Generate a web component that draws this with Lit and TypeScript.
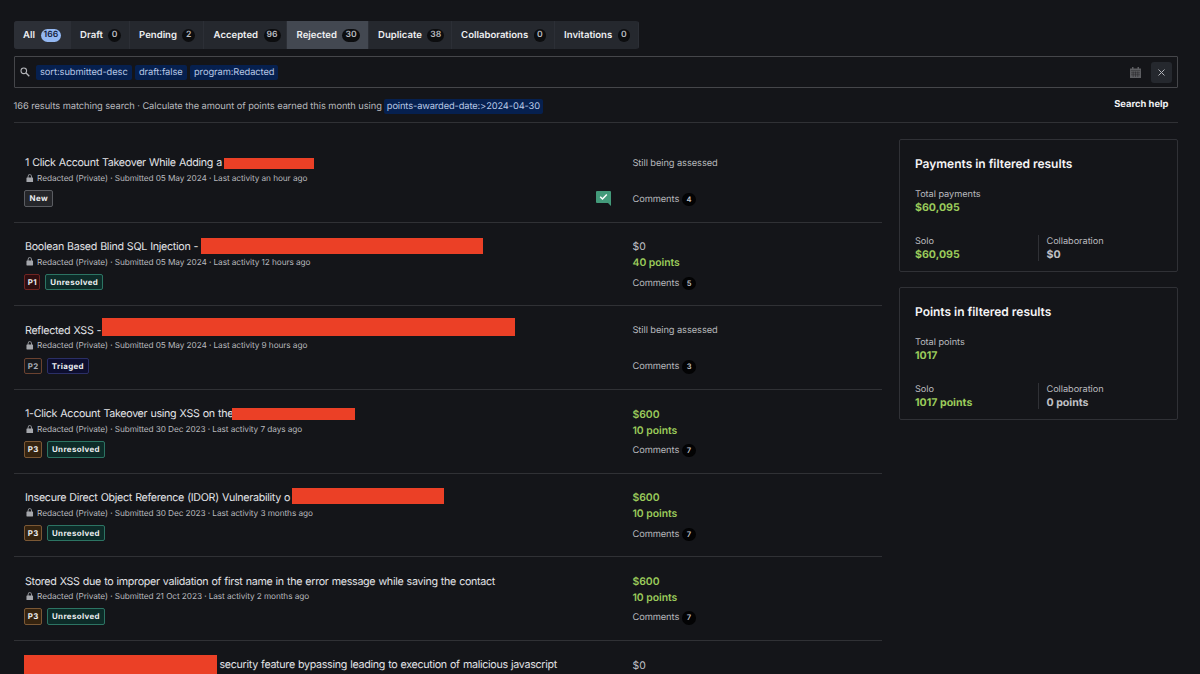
import { LitElement, html, css, svg, nothing } from "lit";
import { customElement } from "lit/decorators.js";
import { classMap } from "lit/directives/class-map.js";
import { styleMap } from "lit/directives/style-map.js";

interface Tab { label: string; count: number; width: number; kind?: string }
interface Mask { x: number; y: number; w: number; h: number }
interface Row {
  title: string; indent?: number; mask?: Mask; submitted: string; activity: string;
  priority?: string; status: string; bounty?: string; points?: string; comments?: number; flag?: boolean; partial?: boolean;
}

const TABS: Tab[] = [
  { label: "All", count: 166, width: 57, kind: "current" },
  { label: "Draft", count: 0, width: 59 },
  { label: "Pending", count: 2, width: 74.5 },
  { label: "Accepted", count: 96, width: 83 },
  { label: "Rejected", count: 30, width: 81.5, kind: "hovered" },
  { label: "Duplicate", count: 38, width: 83 },
  { label: "Collaborations", count: 0, width: 103 },
  { label: "Invitations", count: 0, width: 84.5 },
];

const ROWS: Row[] = [
  { title: "1 Click Account Takeover While Adding a", mask: { x: 199, y: 2.5, w: 90.3, h: 11.5 }, submitted: "05 May 2024", activity: "an hour ago", status: "New", comments: 4, flag: true },
  { title: "Boolean Based Blind SQL Injection -", mask: { x: 175.5, y: -1, w: 282.3, h: 16.3 }, submitted: "05 May 2024", activity: "12 hours ago", priority: "P1", status: "Unresolved", bounty: "$0", points: "40 points", comments: 5 },
  { title: "Reflected XSS -", mask: { x: 77, y: -4.6, w: 413.4, h: 18.6 }, submitted: "05 May 2024", activity: "9 hours ago", priority: "P2", status: "Triaged", comments: 3 },
  { title: "1-Click Account Takeover using XSS on the", mask: { x: 207.2, y: 1.7, w: 122.4, h: 12.2 }, submitted: "30 Dec 2023", activity: "7 days ago", priority: "P3", status: "Unresolved", bounty: "$600", points: "10 points", comments: 7 },
  { title: "Insecure Direct Object Reference (IDOR) Vulnerability o", mask: { x: 267, y: -1.3, w: 152, h: 15.8 }, submitted: "30 Dec 2023", activity: "3 months ago", priority: "P3", status: "Unresolved", bounty: "$600", points: "10 points", comments: 7 },
  { title: "Stored XSS due to improper validation of first name in the error message while saving the contact", submitted: "21 Oct 2023", activity: "2 months ago", priority: "P3", status: "Unresolved", bounty: "$600", points: "10 points", comments: 7 },
  { title: "security feature bypassing leading to execution of malicious javascript", indent: 194.5, mask: { x: -1.5, y: -2, w: 193.2, h: 24 }, submitted: "", activity: "", status: "", bounty: "$0", partial: true },
];

const lock = svg`<svg class="lock" viewBox="0 0 16 18"><path fill="currentColor" d="M3.5 7.5V5a4.5 4.5 0 0 1 9 0v2.5H14a1 1 0 0 1 1 1V17a1 1 0 0 1-1 1H2a1 1 0 0 1-1-1V8.5a1 1 0 0 1 1-1zM5.3 7.5h5.4V5a2.7 2.7 0 0 0-5.4 0z"/></svg>`;

@customElement("report-row")
export class ReportRow extends LitElement {
  static properties = { row: { attribute: false } };
  declare row: Row;

  static styles = css`
    :host { display: grid; grid-template-columns: 607.5px 1fr; box-sizing: border-box; height: 83.65px; padding: 16px 0 0 11.5px; border-bottom: 1px solid #303135; white-space: nowrap; }
    .main { position: relative; padding-top: 0.3px; }
    .title { font-size: 10.7px; line-height: 15px; letter-spacing: -0.3px; word-spacing: 0.45px; color: #e2e3e7; }
    .mask { position: absolute; background: #eb4026; }
    .meta { display: flex; align-items: center; gap: 3.6px; height: 12px; margin-top: 1.7px; padding-left: 1px; font-size: 8.25px; letter-spacing: -0.08px; color: #b8b9be; }
    .lock { width: 7.5px; height: 8.5px; color: #a5a7ac; }
    .foot { display: flex; align-items: center; height: 17px; margin-top: 6px; gap: 5px; }
    .tag { box-sizing: border-box; height: 16.5px; padding: 0 3.7px 0 4.2px; border: 1px solid; border-radius: 2px; font-size: 7.9px; line-height: 15.5px; font-weight: 700; letter-spacing: 0.38px; color: #eceef0; }
    .tag.p { padding: 0 2px 0 2.4px; margin-left: -0.6px; }
    .tag.New { background: #25262a; border-color: #5a5c61; margin-left: -0.6px; }
    .P1 { background: #2e0e10; border-color: #702422; }
    .tag.P2 { background: #17181b; border-color: #6b4230; color: #a9adb6; }
    .P3 { background: #35230f; border-color: #7b5835; }
    .Unresolved { background: #0d2b28; border-color: #2c7463; }
    .Triaged { background: #0d0e2e; border-color: #2b2f66; }
    .flag { width: 15px; height: 15px; margin-left: auto; margin-right: 21.5px; }
    .side { display: flex; flex-direction: column; padding-top: 0.8px; font-size: 9.3px; letter-spacing: -0.09px; color: #b8b9be; }
    .pending { height: 34px; line-height: 15px; }
    .bounty, .points { font-size: 10.4px; line-height: 16.8px; letter-spacing: -0.03px; }
    .bounty { height: 16px; color: #c0c1c6; }
    .points { height: 18px; }
    .green { font-weight: 600; color: #9bcb5b; }
    .comments { display: flex; align-items: center; gap: 3px; height: 15px; margin-top: 2.4px; }
    .count { display: grid; place-items: center; width: 13.5px; height: 13.5px; border-radius: 50%; background: #030304; color: #c3c5ca; font-size: 7.5px; font-weight: 600; }
  `;

  render() {
    const r = this.row;
    return html`
      <div class="main">
        <div class="title" style=${styleMap({ paddingLeft: `${r.indent ?? 0}px` })}>${r.title}</div>
        ${r.mask ? html`<div class="mask" style=${styleMap({ left: `${r.mask.x}px`, top: `${r.mask.y}px`, width: `${r.mask.w}px`, height: `${r.mask.h}px` })}></div>` : nothing}
        ${r.partial ? nothing : html`
        <div class="meta">${lock}<span class="metatext">Redacted (Private) · Submitted ${r.submitted} · Last activity ${r.activity}</span></div>
        <div class="foot">
          ${r.priority ? html`<span class="tag p ${r.priority}">${r.priority}</span>` : nothing}
          <span class="tag ${r.status}">${r.status}</span>
          ${r.flag ? html`<svg class="flag" viewBox="0 0 15 15"><path fill="#439a7a" d="M1 0h13a1 1 0 0 1 1 1v14l-3-3H1a1 1 0 0 1-1-1V1a1 1 0 0 1 1-1z"/><path d="M4.2 5.8 6.5 8 10.8 3.6" fill="none" stroke="#fff" stroke-width="1.5"/></svg>` : nothing}
        </div>`}
      </div>
      <div class="side">
        ${r.bounty
          ? html`<div class=${classMap({ bounty: true, green: r.bounty !== "$0" })}>${r.bounty}</div>${r.points ? html`<div class="points green">${r.points}</div>` : nothing}`
          : html`<div class="pending">Still being assessed</div>`}
        ${r.comments ? html`<div class="comments">Comments <span class="count">${r.comments}</span></div>` : nothing}
      </div>`;
  }
}

@customElement("totals-card")
export class TotalsCard extends LitElement {
  static properties = { heading: {}, label: {}, total: {}, solo: {}, collab: {} };
  declare heading: string;
  declare label: string;
  declare total: string;
  declare solo: string;
  declare collab: string;

  static styles = css`
    :host { display: block; box-sizing: border-box; height: 133px; border: 1px solid #303136; border-radius: 2px; padding: 16px 15.5px 0; font-size: 9.2px; line-height: 13px; letter-spacing: -0.05px; color: #b8b9be; white-space: nowrap; }
    .heading { height: 16px; margin-bottom: 16px; font-size: 12px; line-height: 16px; font-weight: 600; letter-spacing: -0.02px; color: #f4f4f6; }
    .value { font-size: 10.6px; font-weight: 700; letter-spacing: 0; color: #c0c1c6; line-height: 13px; }
    .green { color: #9bcb5b; }
    .split { display: grid; grid-template-columns: 122.5px 1fr; margin-top: 21px; }
    .collab { border-left: 1px solid #303136; padding-left: 8px; }
  `;

  render() {
    return html`
      <div class="heading">${this.heading}</div>
      <div class="label">${this.label}</div>
      <div class="value green">${this.total}</div>
      <div class="split">
        <div><div class="label">Solo</div><div class="value green">${this.solo}</div></div>
        <div class="collab"><div class="label">Collaboration</div><div class="value">${this.collab}</div></div>
      </div>`;
  }
}

@customElement("app-root")
export class AppRoot extends LitElement {
  static styles = css`
    :host { display: block; box-sizing: border-box; width: 1200px; height: 674px; overflow: hidden; padding: 21px 22px 0 13.5px; background: #141519; color: #b8b9be; font-family: Inter, "Liberation Sans", sans-serif; text-rendering: geometricPrecision; white-space: nowrap; }
    .tabs { display: flex; width: 625.5px; height: 27.5px; border-radius: 3px; overflow: hidden; background: #25282e; }
    .tab { box-sizing: border-box; display: flex; flex: none; align-items: center; gap: 5.5px; padding: 1px 0 0 9.6px; border-right: 1px solid #2c2f36; font-size: 9.55px; font-weight: 600; color: #eff0f2; }
    .current { background: #2c2f36; }
    .hovered { background: #434851; }
    .badge { box-sizing: border-box; display: grid; place-items: center; min-width: 12.5px; height: 12.5px; padding: 0 3px; border-radius: 7px; background: #0c0d0f; color: #b9bbc0; font-size: 8.6px; }
    .current .badge { background: #94b8f2; color: #14213b; }
    .search { box-sizing: border-box; display: flex; align-items: center; height: 32px; margin-top: 7.5px; padding: 0 5px 0 5.5px; border: 1px solid #45464a; border-radius: 1px; }
    .glass { width: 10px; height: 10px; margin-right: 6px; }
    .chip { box-sizing: border-box; height: 15px; margin-right: 3.3px; padding: 0 4px; border-radius: 2px; background: #06204f; color: #b9c9e6; font-size: 9.3px; line-height: 16px; letter-spacing: -0.06px; }
    .cal { width: 11px; height: 11px; margin-left: auto; margin-right: 10.5px; }
    .close { display: grid; place-items: center; width: 21px; height: 21px; border-radius: 3px; background: #25282e; }
    .close svg { width: 7px; height: 7px; }
    .summary { box-sizing: border-box; display: flex; align-items: center; height: 34.5px; padding: 4px 9.5px 0 0; border-bottom: 1px solid #303135; font-size: 9.3px; }
    .hint { letter-spacing: -0.065px; }
    .summary .chip { margin: 0 0 0 2px; padding: 0 3px; letter-spacing: -0.115px; }
    .help { margin: -5px 0 0 auto; font-size: 9.4px; font-weight: 700; color: #eff0f2; }
    .body { display: grid; grid-template-columns: 868.5px 279.5px; column-gap: 16.5px; padding-top: 16.5px; }
    .cards { display: grid; gap: 15px; align-content: start; }
  `;

  render() {
    return html`
      <nav class="tabs">
        ${TABS.map((t) => html`<div class="tab ${t.kind ?? ""}" style=${styleMap({ width: `${t.width}px` })}><span class="name">${t.label}</span><span class="badge">${t.count}</span></div>`)}
      </nav>
      <div class="search">
        <svg class="glass" viewBox="0 0 10 10" fill="none" stroke="#b4b5ba"><circle cx="3.8" cy="3.8" r="2.8" stroke-width="1.1"/><path d="M6 6 9.3 9.3" stroke-width="1.3"/></svg>
        <span class="chip">sort:submitted-desc</span><span class="chip">draft:false</span><span class="chip">program:Redacted</span>
        <svg class="cal" viewBox="0 0 11 11"><path fill="#5c5d61" d="M0 1.5h2V0h1.500v1.500h4V0H9v1.500h2V11H0z"/><path stroke="#202125" stroke-width=".5" d="M.8 3.700h9.400M1 5.800h9M1 7.800h9M3.200 4.500V10M5.500 4.500V10M7.800 4.500V10"/></svg>
        <span class="close"><svg viewBox="0 0 7 7" stroke="#b0b2b8" stroke-width="1"><path d="M.5.5l6 6m0-6l-6 6"/></svg></span>
      </div>
      <div class="summary">
        <span class="hint">166 results matching search · Calculate the amount of points earned this month using</span>
        <span class="chip">points-awarded-date:&gt;2024-04-30</span>
        <span class="help">Search help</span>
      </div>
      <div class="body">
        <div class="list">${ROWS.map((r) => html`<report-row .row=${r}></report-row>`)}</div>
        <div class="cards">
          <totals-card heading="Payments in filtered results" label="Total payments" total="$60,095" solo="$60,095" collab="$0"></totals-card>
          <totals-card heading="Points in filtered results" label="Total points" total="1017" solo="1017 points" collab="0 points"></totals-card>
        </div>
      </div>`;
  }
}
